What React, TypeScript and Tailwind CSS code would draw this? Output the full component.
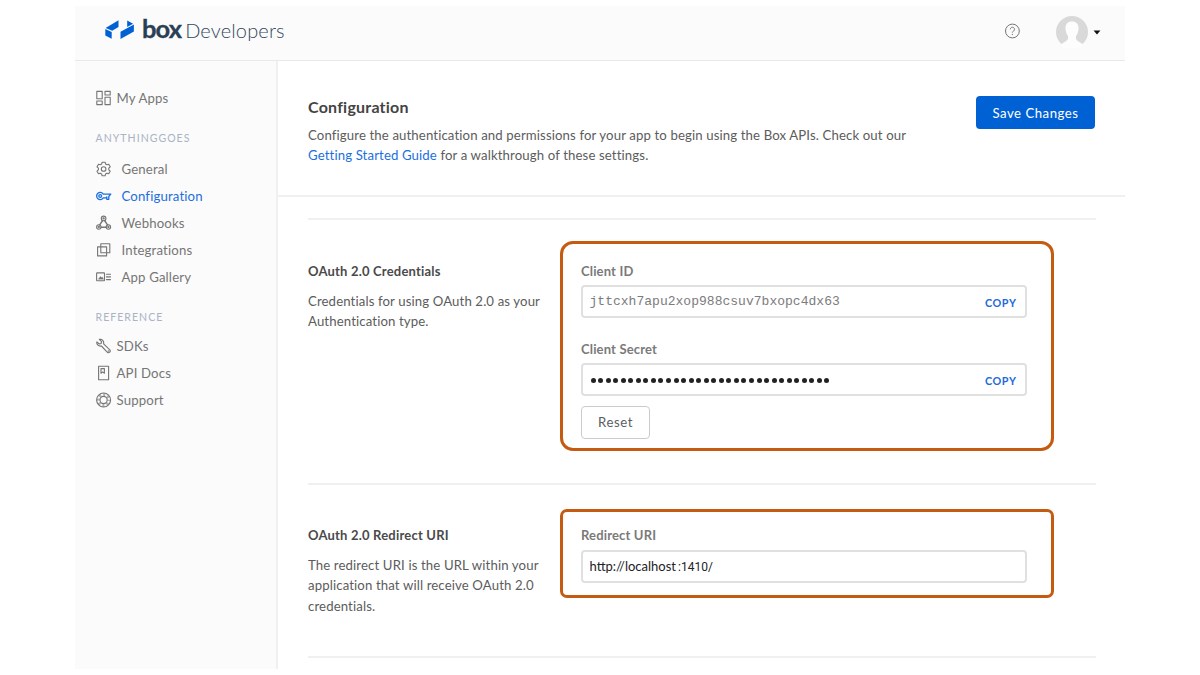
import type { ReactNode } from 'react';

function Icon({ children, className = '' }: { children: ReactNode; className?: string }) {
  return (
    <svg
      viewBox="0 0 16 16"
      className={`mb-[1.5px] h-4 w-4 shrink-0 ${className}`}
      fill="none"
      stroke="currentColor"
      strokeWidth="1.1"
      strokeLinejoin="round"
      strokeLinecap="round"
    >
      <g transform="translate(-0.4 0)">{children}</g>
    </svg>
  );
}

const AppsIcon = () => (
  <Icon>
    <rect x="1.2" y="1.4" width="5.4" height="7.4" />
    <rect x="9.4" y="1.4" width="5.2" height="3.6" />
    <rect x="1.2" y="11" width="5.4" height="3.6" />
    <rect x="9.4" y="7.2" width="5.2" height="7.4" />
  </Icon>
);

const GearIcon = () => (
  <Icon>
    <path d="M6.5 1.2h3l.5 1.9 1.2.7 1.9-.6 1.5 2.6-1.4 1.4v1.6l1.4 1.4-1.5 2.6-1.9-.6-1.2.7-.5 1.9h-3L6 12.9l-1.2-.7-1.9.6-1.5-2.6 1.4-1.4V7.2L1.4 5.8l1.5-2.6 1.9.6L6 3.1z" />
    <circle cx="8" cy="8" r="2.3" />
  </Icon>
);

const KeyIcon = () => (
  <Icon className="[stroke-width:1.3]">
    <path d="M7.7 6.1A3.6 3.6 0 1 0 7.7 9.9H10.3L11.2 9v2.3h2V8.5l1.9-2.4z" />
    <circle cx="4.6" cy="8" r="1.4" />
  </Icon>
);

const WebhookIcon = () => (
  <Icon>
    <circle cx="8" cy="3.4" r="2.3" />
    <circle cx="3.2" cy="12" r="2.2" />
    <circle cx="12.8" cy="12" r="2.2" />
    <circle cx="8" cy="3.4" r=".6" />
    <circle cx="3.2" cy="12" r=".6" />
    <circle cx="12.8" cy="12" r=".6" />
    <path d="M7 5.5 4.1 9.9M9 5.5l2.9 4.4M5.5 12.2h5.1" strokeWidth="1.4" />
  </Icon>
);

const IntegrationsIcon = () => (
  <Icon>
    <rect x="5.2" y="1.7" width="9" height="9" />
    <rect x="2" y="4.9" width="9" height="9" />
  </Icon>
);

const GalleryIcon = () => (
  <Icon>
    <rect x="1" y="3.9" width="7.9" height="7.9" rx=".5" />
    <path d="M3 10 4.8 7.6l1 1.1.8-.7L7.7 10z" fill="currentColor" strokeWidth=".5" />
    <path d="M10.9 5.2h4M10.9 7.9h4M10.9 10.6h4" />
  </Icon>
);

const WrenchIcon = () => (
  <Icon>
    <path d="M3.7 1.4 6 3.6 5.5 5.5 3.6 6 1.3 3.8C.6 6.6 3 8.7 5.8 8l6 6.3c1.7 1.3 3.7-.8 2.4-2.4L8 5.8C8.600 3 6.500.7 3.700 1.400z" />
    <circle cx="12.9" cy="13" r=".3" />
  </Icon>
);

const DocsIcon = () => (
  <Icon>
    <rect x="3" y="1.2" width="10" height="13.6" />
    <path d="M5.4 3.6h3.4v4.6L7.1 6.9 5.4 8.2z" />
  </Icon>
);

const SupportIcon = () => (
  <Icon>
    <circle cx="8" cy="8" r="7" />
    <circle cx="8" cy="8" r="3.6" />
    <circle cx="8" cy="8" r="5.3" strokeWidth="3.2" strokeDasharray="2.08 2.08" strokeDashoffset="1.04" strokeOpacity=".55" strokeLinecap="butt" />
  </Icon>
);

function Heading({ children }: { children: string }) {
  return <div className="h-5 text-[10.5px] leading-5 tracking-[1.05px] text-[#a9b3c4]">{children}</div>;
}

function NavItem({
  icon,
  label,
  wide = false,
  active = false,
}: {
  icon: ReactNode;
  label: string;
  wide?: boolean;
  active?: boolean;
}) {
  return (
    <a className={`flex h-[27px] items-center ${wide ? 'gap-[10px]' : 'gap-[5px]'} ${active ? 'text-[#1b6fe0]' : 'text-[#767676]'}`}>
      {icon}
      <span className="text-[13.2px] tracking-[0.15px]">{label}</span>
    </a>
  );
}

function Label({ children }: { children: string }) {
  return <div className="h-5 text-[13px] leading-5 font-bold tracking-[0.16px] text-[#7a7a7a]">{children}</div>;
}

function Field({ children, copy = false }: { children: ReactNode; copy?: boolean }) {
  return (
    <div className="flex h-[33px] items-center justify-between rounded-[4px] border-2 border-[#e0e0e0] pr-[8.5px] pl-[6.5px]">
      {children}
      {copy && <button className="mt-[2px] text-[10.8px] leading-4 font-bold tracking-[0.6px] text-[#1b6bd8]">COPY</button>}
    </div>
  );
}

function SectionText({ title, lines }: { title: string; lines: string[] }) {
  return (
    <div className="w-[252px] shrink-0 whitespace-nowrap">
      <h2 className="h-5 text-[13px] leading-5 font-bold tracking-[0.2px] text-[#4a4a4a]">{title}</h2>
      <p className="mt-[10px] text-[13.2px] leading-[20.3px] tracking-[0.12px] text-[#5c5c5c]">
        {lines.map((line) => (
          <span key={line} className="block">
            {line}
          </span>
        ))}
      </p>
    </div>
  );
}

export default function App() {
  return (
    <div className="h-[675px] w-[1200px] overflow-hidden bg-white pt-[6px] pl-[75px] font-['Lato',sans-serif]">
      <div className="flex h-[663px] w-[1050px] flex-col">
        <header className="flex h-[55px] shrink-0 items-center justify-between border-b border-[#e9e9e9] bg-[#fbfbfb] pr-[24px] pb-[2px] pl-[30px]">
          <div className="flex items-center">
            <svg viewBox="0 0 30 20" className="mb-[5px] h-5 w-[30px]" fill="#0061d5">
              <path d="M.6 8 13.5.3v6.800L7.200 10.700z" />
              <path d="M.3 8.900 6.700 11.900v6.900L.3 15.500z" />
              <path d="M22.200.4 28.100 3.700 22.200 7z" />
              <path d="M28.900 4.400v7L15.500 19v-7.300z" />
            </svg>
            <span className="mb-[7px] ml-[7px] flex items-baseline whitespace-nowrap">
              <span className="text-[25.5px] leading-8 font-bold tracking-[-0.9px] text-[#2a3f54] [-webkit-text-stroke:0.3px_#2a3f54]">box</span>
              <span className="ml-[4px] text-[20px] leading-8 font-light tracking-[0.15px] text-[#33475b]">Developers</span>
            </span>
          </div>
          <div className="flex items-center">
            <svg viewBox="0 0 16 16" className="mr-[1px] mb-[3px] h-4 w-4" fill="none" stroke="#767676">
              <circle cx="8.4" cy="8" r="6.9" />
              <path d="M6.3 6.300a2.100 2.100 0 1 1 3.200 1.800C8.600 8.600 8.400 8.900 8.400 9.700M8.400 10.900v1.200" />
            </svg>
            <svg viewBox="0 0 32 32" className="ml-[35px] h-8 w-8">
              <circle cx="16" cy="16" r="16" fill="#d9d9d9" />
              <path d="M16 5.500c4.500 0 6.700 2.600 6.500 7-.1 3.300-1.100 5.600-2.500 7.500-.6 3.700 1 5.200 7.200 8.200L24 33H8l-3.200-4.800c6.200-3 7.800-4.500 7.200-8.200-1.400-1.900-2.400-4.200-2.500-7.500-.2-4.400 2-7 6.500-7z" fill="#fdfdfd" />
            </svg>
            <svg viewBox="0 0 8 5" className="ml-[5px] h-[5px] w-2">
              <path d="M.6.6H7.4L4 4.4z" fill="#111" />
            </svg>
          </div>
        </header>

        <div className="flex min-h-0 flex-1">
          <nav className="w-[203px] shrink-0 border-r-2 border-[#f0f0f0] bg-[#fbfbfb] pt-[24px] pl-[20.5px]">
            <NavItem icon={<AppsIcon />} label="My Apps" />
            <div className="mt-[16px] mb-[8px]">
              <Heading>ANYTHINGGOES</Heading>
            </div>
            <NavItem wide icon={<GearIcon />} label="General" />
            <NavItem wide active icon={<KeyIcon />} label="Configuration" />
            <NavItem wide icon={<WebhookIcon />} label="Webhooks" />
            <NavItem wide icon={<IntegrationsIcon />} label="Integrations" />
            <NavItem wide icon={<GalleryIcon />} label="App Gallery" />
            <div className="mt-[16px] mb-[6px]">
              <Heading>REFERENCE</Heading>
            </div>
            <NavItem icon={<WrenchIcon />} label="SDKs" />
            <NavItem icon={<DocsIcon />} label="API Docs" />
            <NavItem icon={<SupportIcon />} label="Support" />
          </nav>

          <main className="flex flex-1 flex-col">
            <div className="flex h-[136px] shrink-0 justify-between border-b-2 border-[#f0f0f0] pt-[35px] pr-[30px] pl-[30px]">
              <div className="whitespace-nowrap">
                <h1 className="h-[22px] text-[16px] leading-[22px] font-bold tracking-[0.22px] text-[#444444]">Configuration</h1>
                <p className="mt-[7px] text-[13.2px] leading-[20.3px] tracking-[0.12px] text-[#5c5c5c]">
                  <span className="block">Configure the authentication and permissions for your app to begin using the Box APIs. Check out our</span>
                  <span className="block">
                    <a className="text-[#1b6fe0]">Getting Started Guide</a> for a walkthrough of these settings.
                  </span>
                </p>
              </div>
              <button className="h-[33px] w-[119px] rounded-[4px] bg-[#0061d5] pt-[2px] text-[13.2px] tracking-[0.5px] text-white">Save Changes</button>
            </div>

            <div className="mt-[21px] ml-[30px] w-[788px]">
              <section className="flex h-[265px] border-t-2 border-[#f0f0f0] pt-[21px]">
                <div className="pt-[20px]">
                  <SectionText title="OAuth 2.0 Credentials" lines={['Credentials for using OAuth 2.0 as your', 'Authentication type.']} />
                </div>
                <div className="h-[210px] w-[494px] rounded-[13px] border-[3px] border-[#c55a11] pt-[17px] pr-[24px] pl-[18px]">
                  <Label>Client ID</Label>
                  <div className="mt-[4px]">
                    <Field copy>
                      <span className="font-['Liberation_Mono',monospace] text-[13px] tracking-[0.02px] text-[#7c7c7c]">jttcxh7apu2xop988csuv7bxopc4dx63</span>
                    </Field>
                  </div>
                  <div className="mt-[21px]">
                    <Label>Client Secret</Label>
                  </div>
                  <div className="mt-[4px]">
                    <Field copy>
                      <span className="mt-px flex gap-[2.55px] pl-[1px]">
                        {Array.from({ length: 32 }, (_, i) => (
                          <span key={i} className="h-[5px] w-[5px] rounded-full bg-[#222222]" />
                        ))}
                      </span>
                    </Field>
                  </div>
                  <button className="mt-[10px] h-[33px] w-[69px] rounded-[4px] border border-[#c8cccf] text-[13.2px] tracking-[0.55px] text-[#5a5d63]">Reset</button>
                </div>
              </section>

              <section className="flex h-[173px] border-t-2 border-[#f0f0f0] pt-[24px]">
                <div className="pt-[16px]">
                  <SectionText
                    title="OAuth 2.0 Redirect URI"
                    lines={['The redirect URI is the URL within your', 'application that will receive OAuth 2.0', 'credentials.']}
                  />
                </div>
                <div className="h-[89px] w-[494px] rounded-[7px] border-[3px] border-[#c55a11] pt-[13px] pr-[24px] pl-[18px]">
                  <Label>Redirect URI</Label>
                  <div className="mt-[5px]">
                    <Field>
                      <span className="mt-px text-[13px] text-[#222222]">
                        http://localhost<span className="ml-[2px] font-['Roboto',sans-serif] text-[12px]">:1410/</span>
                      </span>
                    </Field>
                  </div>
                </div>
              </section>
              <div className="h-[2px] bg-[#f0f0f0]" />
            </div>
          </main>
        </div>
      </div>
    </div>
  );
}
